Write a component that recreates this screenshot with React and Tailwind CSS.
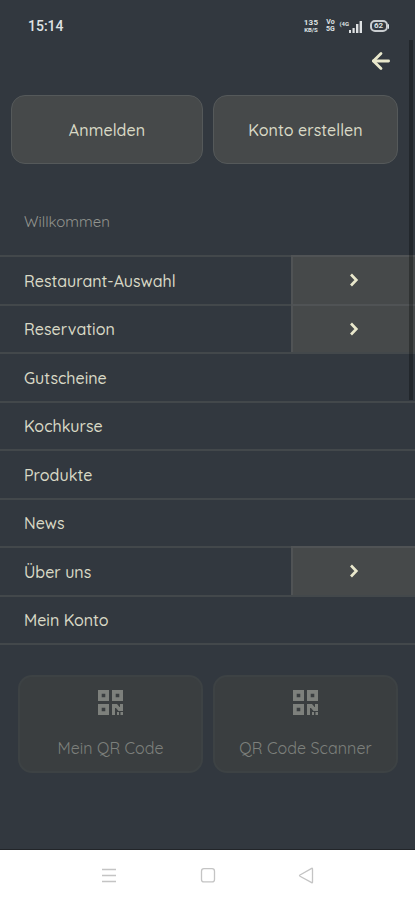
import { ArrowLeft } from 'lucide-react';
import clsx from 'clsx';

const menuItems = [
    { label: 'Restaurant-Auswahl', hasChildren: true },
    { label: 'Reservation', hasChildren: true },
    { label: 'Gutscheine' },
    { label: 'Kochkurse' },
    { label: 'Produkte' },
    { label: 'News' },
    { label: 'Über uns', hasChildren: true },
    { label: 'Mein Konto' },
];

const StatusBar = () => (
    <div className="flex h-[52px] items-center justify-between pl-7 pr-[26px] text-[#dfe2e4]">
        <span className="font-['Roboto',sans-serif] text-[14px] font-medium leading-none">15:14</span>
        <div className="flex items-center font-['Roboto',sans-serif] font-bold">
            <div className="flex w-[17px] flex-col items-center">
                <span className="text-[8px] leading-[8px] tracking-[0.3px]">135</span>
                <span className="text-[6px] leading-[6px]">KB/S</span>
            </div>
            <div className="ml-[6px] flex w-[10px] flex-col items-center text-[7px] leading-[7px]">
                <span>Vo</span>
                <span>5G</span>
            </div>
            <div className="ml-[4px] flex h-[13px] w-[23px] items-start">
                <span className="w-[11px] text-[6px] leading-[7px]">(4G</span>
                <svg viewBox="0 0 14 13" className="-ml-[2px] h-[13px] w-[14px] shrink-0" fill="currentColor">
                    <rect x="0" y="10" width="2" height="3" />
                    <rect x="3.5" y="8" width="2.2" height="5" />
                    <rect x="7" y="4" width="2.4" height="9" />
                    <rect x="10.6" y="1" width="2.4" height="12" />
                </svg>
            </div>
            <div className="ml-[7px] flex h-[12px] w-[18px] items-center justify-center rounded-[5px] border-2 border-[#c9cdd0] text-[8px] leading-none">
                62
            </div>
            <div className="h-[5px] w-[1.5px] rounded-r bg-current" />
        </div>
    </div>
);

const Chevron = () => (
    <svg viewBox="0 0 10 14" className="h-[14px] w-[10px]" fill="none" stroke="#e9e8cc" strokeWidth="2.7">
        <path d="M2 1.5 7.3 7 2 12.5" />
    </svg>
);

const QrIcon = () => (
    <svg viewBox="0 0 25 25" className="h-[25px] w-[25px]" fill="currentColor">
        <path fillRule="evenodd" d="M0 0h11v11H0zM3.7 3.7v3.6h3.6V3.7z" />
        <path fillRule="evenodd" d="M14 0h11v11H14zM17.7 3.7v3.6h3.6V3.7z" />
        <path fillRule="evenodd" d="M0 14h11v11H0zM3.7 17.7v3.6h3.6v-3.6z" />
        <path d="M14 14h5l2.5 3H22v-3h3v7h-4.5l-2.5-3h-1v7h-3zM19 22h2v3h-2zM22.5 22H25v3h-2.5z" />
    </svg>
);

const QrCard = ({ label, spacing }) => (
    <button className="flex h-[98px] flex-1 flex-col items-center rounded-[14px] border-2 border-[#3d4244] bg-[#3a3e40] pt-[13px] text-[#7d807c]">
        <QrIcon />
        <span className={clsx('mt-[23px] whitespace-nowrap text-base leading-5', spacing)}>{label}</span>
    </button>
);

const MenuRow = ({ item }) => (
    <li className="flex h-[48.5px] border-t-2 border-[#43484b]">
        <span className="flex flex-1 items-center pl-6 pt-px font-medium">{item.label}</span>
        {item.hasChildren && (
            <button className="-mt-0.5 flex w-[124px] items-center justify-center border-l-2 border-t-2 border-[#505355] bg-[#46494a]">
                <Chevron />
            </button>
        )}
    </li>
);

const NavBar = () => (
    <div className="flex h-[51px] items-center border-t border-[#222529] bg-white text-[#c4c4c4]">
        <svg viewBox="0 0 415 50" className="h-[50px] w-[415px]" fill="none" stroke="currentColor" strokeWidth="1.3">
            <path d="M102 19.5h14M102 25.5h14M102 31.5h14" />
            <rect x="201.5" y="18.7" width="13" height="13.2" rx="2.5" />
            <path d="M312.5 18.8v13.4q0 .8-.8.4L300 26.2q-1-.6 0-1.2l11.7-6.6q.8-.4.8.4z" />
        </svg>
    </div>
);

const App = () => {
    return (
        <div className="relative flex h-[900px] w-[415px] flex-col overflow-hidden bg-[#32383f] font-['Quicksand','Lato',sans-serif] text-base text-[#d9d9c6]">
            <StatusBar />
            <div className="flex h-[43px] justify-end pr-[21px]">
                <ArrowLeft className="-mt-1 h-[26px] w-[26px] text-[#e9e8cc]" strokeWidth={2.6} />
            </div>

            <div className="flex gap-[10px] pl-[11px] pr-[17px]">
                <button className="h-[69px] w-[192px] rounded-[14px] border-[1.5px] border-[#55595a] bg-[#46494a] font-medium tracking-[0.1px]">
                    Anmelden
                </button>
                <button className="h-[69px] w-[185px] rounded-[14px] border-[1.5px] border-[#55595a] bg-[#46494a] font-medium tracking-[0.05px]">
                    Konto erstellen
                </button>
            </div>

            <div className="flex h-[91px] items-center pb-1 pl-6 pt-[30px] text-[15px] text-[#92958f]">
                <span>Willkommen</span>
            </div>

            <ul className="border-b-2 border-[#43484b]">
                {menuItems.map((item) => (
                    <MenuRow key={item.label} item={item} />
                ))}
            </ul>

            <div className="mt-[30px] flex gap-[10px] pl-[18px] pr-[17px]">
                <QrCard label="Mein QR Code" spacing="tracking-[0.05px]" />
                <QrCard label="QR Code Scanner" spacing="tracking-[0.08px]" />
            </div>

            <div className="mt-auto">
                <NavBar />
            </div>

            {/* Scrollbar */}
            <div className="absolute right-0.5 top-10 h-[360px] w-1 bg-black/30" />
        </div>
    );
};

export default App;
